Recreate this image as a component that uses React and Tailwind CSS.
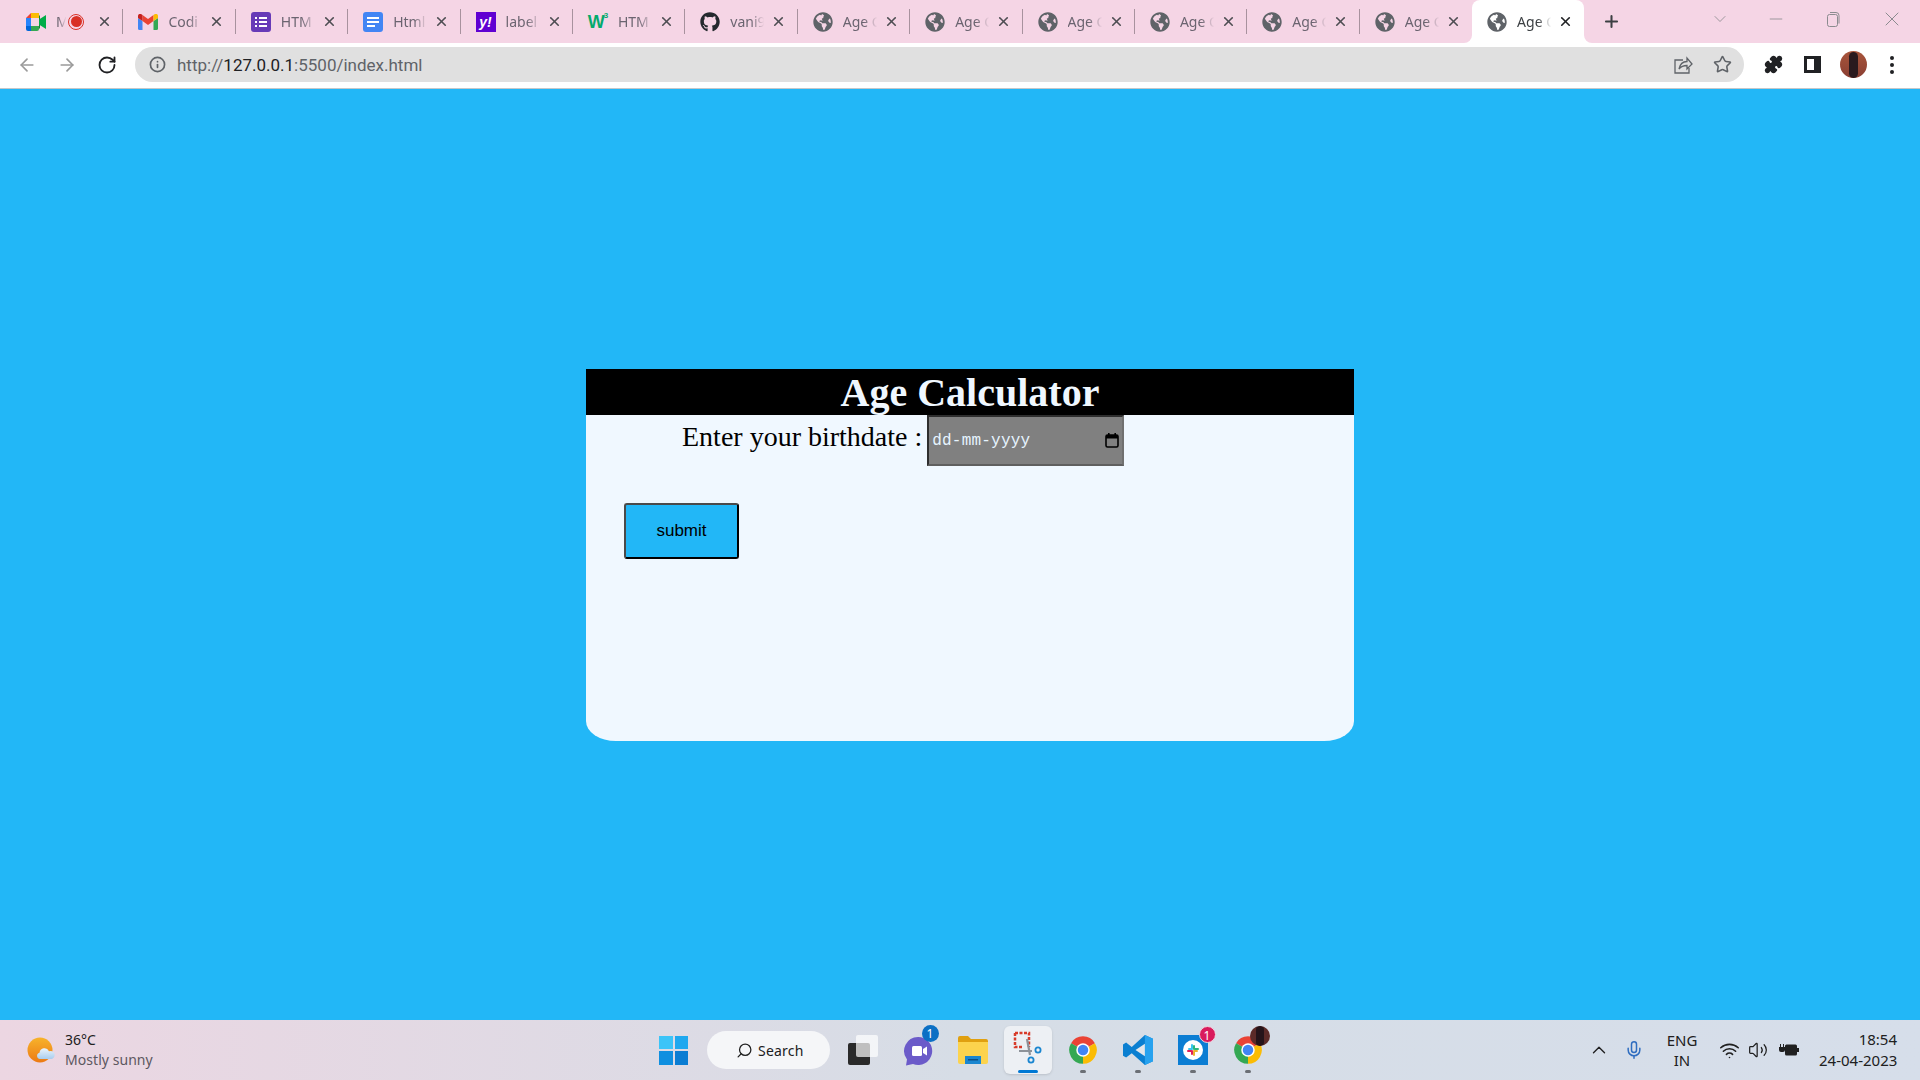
import React from "react";
import {
  ArrowLeft,
  ArrowRight,
  RotateCw,
  Info,
  Star,
  X,
  Plus,
  ChevronDown,
  ChevronUp,
  Minus,
  Mic,
  Wifi,
  Volume2,
  Search,
  Puzzle,
} from "lucide-react";
import { FaGithub, FaGlobeAmericas } from "react-icons/fa";

const MeetIcon = () => (
  <svg width="20" height="18" viewBox="0 0 20 18" className="shrink-0">
    <path d="M5 0h8v5H5z" fill="#fbbc04" />
    <path d="M0 5 5 0v5z" fill="#ea4335" />
    <path d="M0 5h5v8H0z" fill="#2684fc" />
    <path d="M0 13h5v5H2a2 2 0 0 1-2-2z" fill="#0066da" />
    <path d="M5 13h8v3a2 2 0 0 1-2 2H5z" fill="#34a853" />
    <path d="M13 2v14l1-1V3z" fill="#188038" />
    <path d="M13 6.5 20 2v14l-7-4.5z" fill="#00ac47" />
  </svg>
);

const GmailIcon = () => (
  <svg width="20" height="16" viewBox="0 0 20 16" className="shrink-0">
    <path d="M0 4v10.5A1.5 1.5 0 0 0 1.5 16H4.5V7z" fill="#4285f4" />
    <path d="M15.5 7v9h3a1.5 1.5 0 0 0 1.5-1.5V4z" fill="#34a853" />
    <path d="M4.5 7 10 11l5.5-4V1L10 5 4.500 1z" fill="#ea4335" />
    <path d="M0 4 4.500 7V1L3 0C1.500-.6 0 .6 0 2z" fill="#c5221f" />
    <path d="M15.500 1v6L20 4V2c0-1.400-1.500-2.600-3-2z" fill="#fbbc04" />
  </svg>
);

const FormsIcon = () => (
  <div className="w-5 h-5 shrink-0 rounded-[3px] bg-[#673ab7] flex flex-col justify-center gap-[2px] px-1">
    {[0, 1, 2].map((i) => (
      <div key={i} className="flex gap-[2px]">
        <div className="w-[2px] h-[2px] bg-white" />
        <div className="flex-1 h-[2px] bg-white" />
      </div>
    ))}
  </div>
);

const DocsIcon = () => (
  <div className="w-5 h-5 shrink-0 rounded-[3px] bg-[#4285f4] flex flex-col justify-center gap-[2px] px-1">
    <div className="h-[2px] bg-white" />
    <div className="h-[2px] bg-white" />
    <div className="h-[2px] w-2 bg-white" />
  </div>
);

const YahooIcon = () => (
  <div className="w-5 h-5 shrink-0 bg-[#6001d2] flex items-center justify-center text-white text-[14px] font-bold italic font-['Liberation_Sans',sans-serif] leading-none">
    y!
  </div>
);

const W3Icon = () => (
  <div className="w-5 h-5 shrink-0 flex items-start justify-center text-[#04aa6d] font-bold font-['Liberation_Sans',sans-serif] leading-none">
    <span className="text-[18px] mt-[1px] tracking-[-1px]">W</span>
    <span className="text-[8px] text-[#04aa6d]">3</span>
  </div>
);

const GlobeIcon = () => (
  <FaGlobeAmericas className="w-5 h-5 shrink-0 text-[#5f6368]" />
);

const ChromeLogo = ({ size = 30 }) => (
  <svg width={size} height={size} viewBox="0 0 24 24">
    <path d="M12 12 2.470 6.500A11 11 0 0 1 21.530 6.500z" fill="#ea4335" />
    <path d="M12 12 2.470 6.500A11 11 0 0 0 12 23z" fill="#34a853" />
    <path d="M12 12v11A11 11 0 0 0 21.530 6.500z" fill="#fbbc04" />
    <circle cx="12" cy="12" r="5.400" fill="#fff" />
    <circle cx="12" cy="12" r="4.200" fill="#4285f4" />
  </svg>
);

const tabs = [
  { icon: <MeetIcon />, label: "M", record: true },
  { icon: <GmailIcon />, label: "Codi" },
  { icon: <FormsIcon />, label: "HTM" },
  { icon: <DocsIcon />, label: "Html" },
  { icon: <YahooIcon />, label: "label" },
  { icon: <W3Icon />, label: "HTM" },
  { icon: <FaGithub className="w-5 h-5 shrink-0 text-[#24292e]" />, label: "vani9" },
  { icon: <GlobeIcon />, label: "Age C" },
  { icon: <GlobeIcon />, label: "Age C" },
  { icon: <GlobeIcon />, label: "Age C" },
  { icon: <GlobeIcon />, label: "Age C" },
  { icon: <GlobeIcon />, label: "Age C" },
  { icon: <GlobeIcon />, label: "Age C" },
  { icon: <GlobeIcon />, label: "Age C", active: true },
];

const Tab = ({ tab, showDivider }) => (
  <div
    className={`relative w-[112.4px] shrink-0 flex items-center pl-[15px] ${
      tab.active ? "bg-white rounded-t-lg text-[#3c4043]" : "text-[#6b6470]"
    }`}
  >
    {tab.icon}
    {tab.record ? (
      <>
        <div className="ml-[10px] -mt-px w-[13px] text-[14px] [mask-image:linear-gradient(to_right,black_20%,transparent_80%)]">
          {tab.label}
        </div>
        <div className="w-[16px] h-[16px] -ml-px rounded-full border border-[#d93025] flex items-center justify-center">
          <div className="w-[11px] h-[11px] rounded-full bg-[#d93025]" />
        </div>
      </>
    ) : (
      <div className="ml-[10px] -mt-px w-[38px] whitespace-nowrap text-[14px] [mask-image:linear-gradient(to_right,black_55%,transparent_90%)]">
        {tab.label}
      </div>
    )}
    <X
      className={`absolute left-[75px] w-[15px] h-[15px] translate-x-[11px] ${
        tab.active ? "text-[#202124]" : "text-[#4d4d52]"
      }`}
      strokeWidth={2.6}
    />
    {showDivider && (
      <div className="absolute right-0 top-[9px] h-[25px] w-px bg-[#a8929e]" />
    )}
    {tab.active && (
      <>
        <div className="absolute bottom-0 -left-2 w-2 h-2 bg-white">
          <div className="w-2 h-2 bg-[#f5d5e5] rounded-br-lg" />
        </div>
        <div className="absolute bottom-0 -right-2 w-2 h-2 bg-white">
          <div className="w-2 h-2 bg-[#f5d5e5] rounded-bl-lg" />
        </div>
      </>
    )}
  </div>
);

const TabStrip = () => (
  <div className="h-[43px] bg-[#f5d5e5] flex pl-[11px] shrink-0">
    {tabs.map((tab, i) => (
      <Tab key={i} tab={tab} showDivider={!tab.active && i < tabs.length - 2} />
    ))}
    <div className="w-[54px] flex items-center justify-center">
      <Plus className="w-[19px] h-[19px] text-[#3c4043]" strokeWidth={2.6} />
    </div>
    <div className="flex-1 flex items-start pl-[72px] pt-[9px] text-[#8b8b8f]">
      <ChevronDown className="w-5 h-5 mr-[36px]" strokeWidth={1} />
      <Minus className="w-5 h-5 mr-[37px]" strokeWidth={1} />
      <svg width="20" height="20" viewBox="0 0 20 20" fill="none" stroke="currentColor" className="mr-[37px]">
        <rect x="4.500" y="5.500" width="10" height="12" rx="2" />
        <path d="M7 3.500h6a3 3 0 0 1 3 3v8" />
      </svg>
      <X className="w-6 h-6 -mt-[2px]" strokeWidth={1} />
    </div>
  </div>
);

const Toolbar = () => (
  <div className="h-[46px] bg-white border-b border-[#c4c7c9] flex items-center shrink-0 pb-[2px]">
    <div className="w-[135px] flex items-center pl-[17px] gap-[20px]">
      <ArrowLeft className="w-5 h-5 text-[#9a9a9a]" strokeWidth={2} />
      <ArrowRight className="w-5 h-5 text-[#9a9a9a]" strokeWidth={2} />
      <RotateCw className="w-5 h-5 text-[#202124]" strokeWidth={2.2} />
    </div>
    <div className="w-[1609px] h-[35px] rounded-full bg-[#e0e0e0] flex items-center pl-[14px] pr-[12px]">
      <Info className="w-[17px] h-[17px] text-[#5f6368]" strokeWidth={2.4} />
      <div className="ml-[11px] mt-[2px] text-[17px] leading-none text-[#5f6368] font-['Roboto',sans-serif] flex-1">
        http://<span className="text-[#202124]">127.0.0.1</span>:5500/index.html
      </div>
      <svg width="20" height="20" viewBox="0 0 20 20" fill="none" stroke="#5f6368" strokeWidth="1.300" className="mr-[20px]">
        <path d="M10 5H2v13h14v-5" />
        <path d="M6 14c1-5 4-7.500 8-7.500V3l5 6-5 5v-3.500c-3.500 0-6 1-8 3.500z" />
      </svg>
      <Star className="w-[19px] h-[19px] text-[#5f6368]" strokeWidth={2} />
    </div>
    <div className="flex items-center pl-[20px] gap-[22px]">
      <Puzzle className="w-[19px] h-[19px] text-[#202124] fill-[#202124]" />
      <div className="w-[17px] h-[17px] -ml-px border-[3px] border-[#202124] border-r-[7px] bg-white" />
      <div className="w-[27px] h-[27px] -ml-[3px] -mr-[2px] rounded-full bg-linear-to-b from-[#a8553b] to-[#8a3f33] flex items-center justify-center overflow-hidden">
        <div className="w-[9px] h-[26px] rounded-full bg-[#2a1a1e]" />
      </div>
      <div className="flex flex-col gap-[3px] ml-[3px]">
        <div className="w-1 h-1 rounded-full bg-[#202124]" />
        <div className="w-1 h-1 rounded-full bg-[#202124]" />
        <div className="w-1 h-1 rounded-full bg-[#202124]" />
      </div>
    </div>
  </div>
);

const AgeCard = () => (
  <div className="w-[768px] h-[372px] bg-[#f0f8ff] rounded-bl-[30px_20px] rounded-br-[30px_20px] font-['Liberation_Serif',serif]">
    <h1 className="h-[46px] bg-black text-[#f0f8ff] text-center text-[40px] font-bold leading-[48px]">
      Age Calculator
    </h1>
    <div className="flex items-start pl-[96px]">
      <label className="text-[28px] leading-[44px] text-black">
        Enter your birthdate :
      </label>
      <div className="ml-[5px] w-[197px] h-[51px] bg-[#808080] border-2 border-t-[#2e2e2e] border-l-[#2e2e2e] border-r-[#707070] border-b-[#5f5f5f] flex items-center justify-between pl-[3px] pr-[3px]">
        <span className="mt-[2px] text-[16px] tracking-[0.2px] text-[#e6f4ff] font-['Liberation_Mono',monospace]">
          dd-mm-yyyy
        </span>
        <svg width="14" height="15" viewBox="0 0 14 15">
          <rect x="1" y="2" width="12" height="12" rx="1.500" fill="none" stroke="#000" strokeWidth="1.600" />
          <rect x="1" y="2" width="12" height="3.500" fill="#000" />
          <rect x="3" y="0" width="1.600" height="3" fill="#000" />
          <rect x="9.400" y="0" width="1.600" height="3" fill="#000" />
        </svg>
      </div>
    </div>
    <button className="block mt-[37px] ml-[38px] w-[115px] h-[56px] rounded-[3px] bg-[#22b7f7] border-2 border-t-[#4a4a4a] border-l-[#4a4a4a] border-r-black border-b-black text-[17px] text-black font-['Liberation_Sans',sans-serif]">
      submit
    </button>
  </div>
);

const WeatherIcon = () => (
  <svg width="30" height="26" viewBox="0 0 30 26" className="shrink-0">
    <defs>
      <linearGradient id="sun" x1="0" y1="0" x2="0" y2="1">
        <stop offset="0" stopColor="#f7b32b" />
        <stop offset="1" stopColor="#ec7a14" />
      </linearGradient>
      <linearGradient id="cloud" x1="0" y1="0" x2="0" y2="1">
        <stop offset="0" stopColor="#eaf4fc" />
        <stop offset="1" stopColor="#a9cdee" />
      </linearGradient>
    </defs>
    <circle cx="13" cy="13" r="12.500" fill="url(#sun)" />
    <path d="M13 22a3.200 3.200 0 0 1-.5-6.300 5 5 0 0 1 9.500-1.500A4 4 0 0 1 25 22z" fill="url(#cloud)" />
  </svg>
);

const Weather = () => (
  <div className="w-[640px] flex items-center pl-[27px]">
    <WeatherIcon />
    <div className="ml-[8px] font-['Noto_Sans',sans-serif] text-[14px] leading-[20px]">
      <div className="text-[#202020]">36°C</div>
      <div className="text-[#5d5860] tracking-[0.05px]">Mostly sunny</div>
    </div>
  </div>
);

const TaskIcon = ({ children, running, active }) => (
  <div
    className={`relative w-[48px] h-[48px] mx-[3.500px] flex items-center justify-center rounded-md ${
      active ? "bg-[#edf0f4] shadow-sm" : ""
    }`}
  >
    {children}
    {running && (
      <div
        className={`absolute bottom-[1px] h-[3px] rounded-full ${
          active ? "w-[20px] bg-[#0078d4]" : "w-[6px] bg-[#6b6f75]"
        }`}
      />
    )}
  </div>
);

const Badge = ({ className, children }) => (
  <div
    className={`absolute w-[17px] h-[17px] rounded-full text-white text-[12px] leading-[17px] text-center font-['Noto_Sans',sans-serif] ${className}`}
  >
    {children}
  </div>
);

const TaskbarApps = () => (
  <div className="flex items-center">
    <div className="w-[67px] flex items-center justify-center">
      <div className="grid grid-cols-2 gap-[2px] w-[29px] h-[29px]">
        <div className="bg-[#3cc4f8]" />
        <div className="bg-[#1fa8ef]" />
        <div className="bg-[#0f8fe0]" />
        <div className="bg-[#0b7dd3]" />
      </div>
    </div>
    <div className="w-[123px] h-[38px] rounded-full bg-[#f5f6f8] flex items-center pl-[29px] mr-[5px]">
      <Search className="w-[17px] h-[17px] text-[#202020] -scale-x-100" strokeWidth={1.800} />
      <span className="ml-[5px] text-[14px] tracking-[0.2px] text-[#202020] font-['Noto_Sans',sans-serif]">
        Search
      </span>
    </div>
    <TaskIcon>
      <div className="relative w-[30px] h-[30px]">
        <div className="absolute left-0 bottom-0 w-[22px] h-[22px] rounded-[2px] bg-[#2a2a2a]" />
        <div className="absolute right-0 top-0 w-[22px] h-[22px] rounded-[2px] bg-white/70" />
      </div>
    </TaskIcon>
    <TaskIcon>
      <svg width="30" height="32" viewBox="0 0 30 32">
        <path d="M15 3a14 14 0 1 1-5 27l-7 1.500 1-6A14 14 0 0 1 15 3z" fill="#6b5bc9" />
        <rect x="9" y="12" width="10" height="10" rx="1.500" fill="#fff" />
        <path d="m20 15 4-2.500v9L20 19z" fill="#fff" />
      </svg>
      <Badge className="-top-[1px] right-[3px] bg-[#0b6fc4]">1</Badge>
    </TaskIcon>
    <TaskIcon>
      <svg width="30" height="28" viewBox="0 0 30 28">
        <path d="M0 2a2 2 0 0 1 2-2h8l3 3h15a2 2 0 0 1 2 2v4H0z" fill="#e0a010" />
        <path d="M0 6h30v20a2 2 0 0 1-2 2H2a2 2 0 0 1-2-2z" fill="#fcd34d" />
        <rect x="7" y="20" width="16" height="8" fill="#1a86d0" />
        <rect x="10" y="23" width="10" height="1.500" fill="#0d4f85" />
      </svg>
    </TaskIcon>
    <TaskIcon active running>
      <svg width="30" height="34" viewBox="0 0 30 34" fill="none" className="-mt-[4px]">
        <path d="M2 2h14v14" stroke="#d83b2a" strokeWidth="2.500" strokeDasharray="3 1.500" />
        <path d="M2 2v14h8" stroke="#d83b2a" strokeWidth="2.500" strokeDasharray="3 1.500" />
        <path d="M14 8l3 16M19 20H6" stroke="#8d9299" strokeWidth="2.200" />
        <circle cx="25" cy="19" r="2.600" stroke="#1a86d0" strokeWidth="1.800" />
        <circle cx="18" cy="29" r="2.600" stroke="#1a86d0" strokeWidth="1.800" />
      </svg>
    </TaskIcon>
    <TaskIcon running>
      <ChromeLogo />
    </TaskIcon>
    <TaskIcon running>
      <svg width="30" height="30" viewBox="0 0 24 24">
        <path d="M17.500 0 24 3v18l-6.500 3L7 14.500l-4.500 3.500L0 16.500v-9L2.500 6 7 9.500z" fill="#0a7fd1" />
        <path d="M17.500 0 24 3v18l-6.500 3z" fill="#27a2ef" />
        <path d="M17.500 7 10 12l7.500 5z" fill="#e3e7ec" />
      </svg>
    </TaskIcon>
    <TaskIcon running>
      <div className="w-[30px] h-[30px] bg-[#0b7dd3] flex items-center justify-center">
        <svg width="20" height="20" viewBox="0 0 20 20">
          <circle cx="10" cy="10" r="10" fill="#fff" />
          <rect x="5" y="8" width="5" height="2" rx="1" fill="#36c5f0" />
          <rect x="8" y="4" width="2" height="5" rx="1" fill="#36c5f0" />
          <rect x="10" y="5" width="2" height="5" rx="1" fill="#2eb67d" />
          <rect x="11" y="8" width="5" height="2" rx="1" fill="#2eb67d" />
          <rect x="10" y="10" width="5" height="2" rx="1" fill="#ecb22e" />
          <rect x="10" y="11" width="2" height="5" rx="1" fill="#ecb22e" />
          <rect x="8" y="10" width="2" height="5" rx="1" fill="#e01e5a" />
          <rect x="4" y="10" width="5" height="2" rx="1" fill="#e01e5a" />
        </svg>
      </div>
      <Badge className="top-0 right-[1px] bg-[#d91b5c] border border-[#f0d8e0]">1</Badge>
    </TaskIcon>
    <TaskIcon running>
      <ChromeLogo />
      <div className="absolute top-0 right-[2px] w-[20px] h-[20px] rounded-full bg-[#5b2a28] flex justify-center overflow-hidden">
        <div className="w-[8px] h-[20px] rounded-full bg-[#25141a]" />
      </div>
    </TaskIcon>
  </div>
);

const SystemTray = () => (
  <div className="ml-auto flex items-center pr-[23px] text-[#202020] font-['Noto_Sans',sans-serif] text-[15px]">
    <ChevronUp className="w-[22px] h-[22px]" strokeWidth={1.500} />
    <Mic className="ml-[14px] w-[20px] h-[22px] text-[#2f6dc0]" strokeWidth={1.800} />
    <div className="ml-[19px] w-[38px] text-center leading-[20px]">
      <div>ENG</div>
      <div>IN</div>
    </div>
    <Wifi className="ml-[18px] w-[21px] h-[21px]" strokeWidth={1.800} />
    <Volume2 className="ml-[8px] w-[20px] h-[20px]" strokeWidth={1.500} />
    <svg width="20" height="14" viewBox="0 0 20 14" className="ml-[11px]">
      <rect x="6" y="1.500" width="12" height="11" rx="1.500" fill="#202020" />
      <rect x="18" y="5" width="2" height="4" fill="#202020" />
      <path d="M0 4h6v3a2 2 0 0 1-2 2H2a2 2 0 0 1-2-2zM1 1h1v3H1zM4 1h1v3H4z" fill="#202020" />
    </svg>
    <div className="ml-[20px] w-[78px] text-right leading-[21px]">
      <div>18:54</div>
      <div className="whitespace-nowrap">24-04-2023</div>
    </div>
  </div>
);

const App = () => (
  <div className="w-[1920px] h-[1080px] flex flex-col overflow-hidden">
    <TabStrip />
    <Toolbar />
    <main className="flex-1 bg-[#22b7f7] flex items-center justify-center pl-[20px]">
      <AgeCard />
    </main>
    <footer className="h-[60px] shrink-0 flex items-center bg-linear-to-r from-[#ecd6e2] via-[#d6dde6] to-[#d6deea]">
      <Weather />
      <TaskbarApps />
      <SystemTray />
    </footer>
  </div>
);

export default App;
